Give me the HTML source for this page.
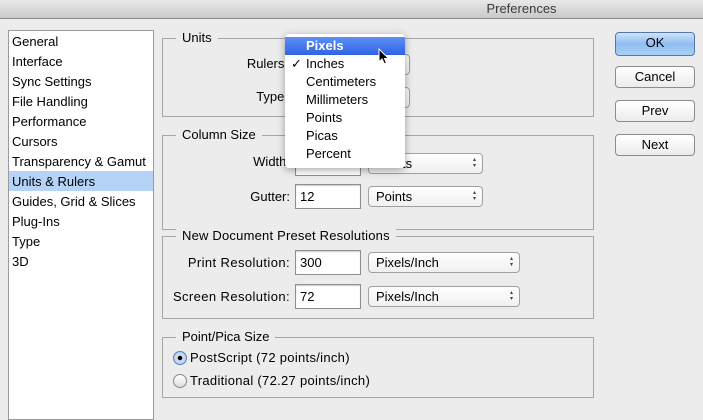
<!DOCTYPE html>
<html><head><style>
*{box-sizing:border-box;margin:0;padding:0}
body{width:703px;height:409px;overflow:hidden;background:#ececec;font-family:"Liberation Sans","DejaVu Sans",sans-serif;font-size:13px;color:#000;position:relative}
.a{position:absolute}
.title{left:0;top:0;width:703px;height:19px;background:linear-gradient(#e8e8e8,#c9c9c9);border-bottom:1px solid #8a8a8a;text-align:center;line-height:18px;color:#3a3a3a;font-size:13px;padding-left:340px}
.side{left:8px;top:30px;width:146px;height:390px;background:#fff;border:1px solid #9a9a9a}
.side div{height:20px;line-height:21px;padding-left:3px}
.side .sel{background:#b5d3f7}
.box{border:1px solid #a5a5a5}
.leg{background:#ececec;padding:0 6px;font-size:13px;line-height:14px}
.inp{background:#fff;border:1px solid #8e8e8e;height:25px;line-height:23px;padding-left:4px;box-shadow:inset 0 1px 1px #ccc}
.selb{background:linear-gradient(#fff,#f0f0f0);border:1px solid #a0a0a0;border-radius:4px;height:21px;line-height:19px;padding-left:7px}
.selb:after{content:"\25B4\A\25BE";white-space:pre;position:absolute;right:6px;top:3px;font-size:6px;line-height:6px;color:#444}
.btn{left:615px;width:80px;height:22px;border:1px solid #8c8c8c;border-radius:4px;background:linear-gradient(#fff,#ececec);text-align:center;line-height:20px}
.lbl{text-align:right}
.menu{left:285px;top:34px;width:120px;height:134px;background:#fff;border-radius:4px;box-shadow:0 2px 8px rgba(0,0,0,.35)}
.menu div{height:18px;line-height:18px;padding-left:21px;position:relative}
.radio{width:14px;height:14px;border-radius:50%;border:1px solid #888;background:linear-gradient(#fff,#ddd)}
</style></head><body>
<div class="a title">Preferences</div>
<div class="a side">
<div>General</div><div>Interface</div><div>Sync Settings</div><div>File Handling</div><div>Performance</div><div>Cursors</div><div>Transparency &amp; Gamut</div><div class="sel">Units &amp; Rulers</div><div>Guides, Grid &amp; Slices</div><div>Plug-Ins</div><div>Type</div><div>3D</div>
</div>

<div class="a box" style="left:162px;top:38px;width:432px;height:79px"></div>
<div class="a leg" style="left:176px;top:31px">Units</div>
<div class="a lbl" style="left:200px;top:56px;width:88px">Rulers:</div>
<div class="a lbl" style="left:200px;top:89px;width:88px">Type:</div>
<div class="a selb" style="left:368px;top:54px;width:42px"></div>
<div class="a selb" style="left:368px;top:87px;width:42px"></div>

<div class="a box" style="left:162px;top:135px;width:432px;height:95px"></div>
<div class="a leg" style="left:176px;top:128px">Column Size</div>
<div class="a lbl" style="left:200px;top:154px;width:90px">Width:</div>
<div class="a inp" style="left:295px;top:151px;width:66px">180</div>
<div class="a selb" style="left:368px;top:153px;width:115px">Points</div>
<div class="a lbl" style="left:200px;top:189px;width:90px">Gutter:</div>
<div class="a inp" style="left:295px;top:184px;width:66px">12</div>
<div class="a selb" style="left:368px;top:186px;width:115px">Points</div>

<div class="a box" style="left:162px;top:236px;width:432px;height:83px"></div>
<div class="a leg" style="left:176px;top:229px;letter-spacing:.2px">New Document Preset Resolutions</div>
<div class="a lbl" style="left:150px;top:255px;width:140px;letter-spacing:.4px">Print Resolution:</div>
<div class="a inp" style="left:295px;top:250px;width:66px">300</div>
<div class="a selb" style="left:368px;top:252px;width:152px">Pixels/Inch</div>
<div class="a lbl" style="left:150px;top:289px;width:140px;letter-spacing:.4px">Screen Resolution:</div>
<div class="a inp" style="left:295px;top:284px;width:66px">72</div>
<div class="a selb" style="left:368px;top:286px;width:152px">Pixels/Inch</div>

<div class="a box" style="left:162px;top:337px;width:432px;height:61px"></div>
<div class="a leg" style="left:176px;top:330px">Point/Pica Size</div>
<div class="a radio" style="left:173px;top:351px;border-color:#5a7fb5;background:radial-gradient(circle,#000 0 2px,#cfe0f5 2.5px,#a6c3ea 100%)"></div>
<div class="a" style="left:190px;top:350px;letter-spacing:.3px">PostScript (72 points/inch)</div>
<div class="a radio" style="left:173px;top:374px"></div>
<div class="a" style="left:190px;top:373px;letter-spacing:.3px">Traditional (72.27 points/inch)</div>

<div class="a btn" style="top:32px;height:24px;background:linear-gradient(#cfe3fb,#8fbdf0 50%,#a9d0f6);border-color:#5678a8">OK</div>
<div class="a btn" style="top:66px">Cancel</div>
<div class="a btn" style="top:100px">Prev</div>
<div class="a btn" style="top:134px">Next</div>

<div class="a menu">
<div style="margin-top:3px;background:linear-gradient(#5f8ff4,#2f62e6);color:#fff;font-weight:bold">Pixels</div>
<div><span style="position:absolute;left:6px">✓</span>Inches</div>
<div>Centimeters</div><div>Millimeters</div><div>Points</div><div>Picas</div><div>Percent</div>
</div>
<svg class="a" style="left:378px;top:48px" width="14" height="18" viewBox="0 0 14 18"><path d="M1 1 L1 14 L4 11 L6.5 16 L8.5 15 L6.5 10.5 L10.5 10.5 Z" fill="#000" stroke="#fff" stroke-width="1"/></svg>
</body></html>
